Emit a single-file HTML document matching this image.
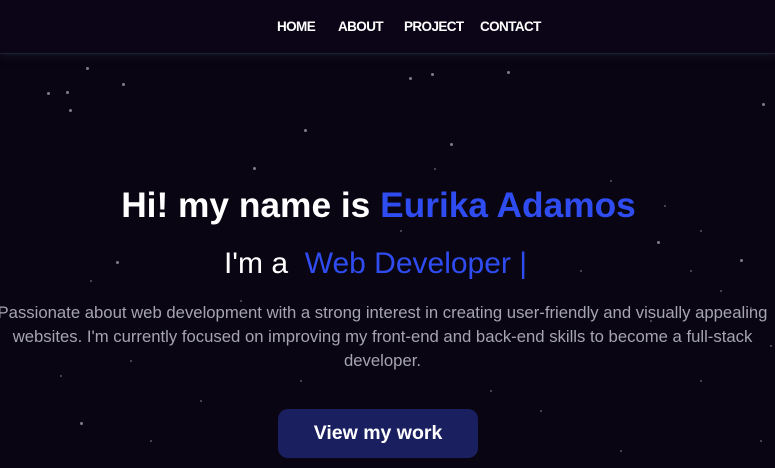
<!DOCTYPE html>
<html><head><meta charset="utf-8"><style>
html,body{margin:0;padding:0;width:775px;height:468px;overflow:hidden;background:#0a0512;font-family:"Liberation Sans",sans-serif}
.nav{position:absolute;left:0;top:0;width:775px;height:53px;background:#0c0517;border-bottom:1px solid #1c2230;box-shadow:0 2px 8px rgba(30,40,60,.5)}
.nav span{position:absolute;top:19px;color:#fff;font-weight:bold;font-size:13.5px;letter-spacing:-0.6px}
.c{position:absolute;left:0;width:775px;text-align:center;white-space:nowrap}
.s{position:absolute;border-radius:50%;background:#8a8a99}
</style></head><body>
<div class="nav">
<span style="left:277px">HOME</span>
<span style="left:338px">ABOUT</span>
<span style="left:404px">PROJECT</span>
<span style="left:480px">CONTACT</span>
</div>
<div id="stars"></div>
<div class="c" style="left:-9px;top:186px;font-size:35.3px;font-weight:bold;color:#fff;">Hi! my name is <span style="color:#2f4cf0">Eurika Adamos</span></div>
<div class="c" style="left:-12px;top:247px;font-size:30px;color:#fff;">I'm a&nbsp; <span style="color:#2f4cf0">Web Developer |</span></div>
<div class="c" style="left:-5px;top:301px;font-size:16.7px;line-height:24px;color:#a4a4b2;">Passionate about web development with a strong interest in creating user-friendly and visually appealing<br>websites. I'm currently focused on improving my front-end and back-end skills to become a full-stack<br>developer.</div>
<div style="position:absolute;left:278px;top:409px;width:200px;height:49px;border-radius:10px;background:#1a1f60;color:#fff;font-size:19.5px;font-weight:bold;text-align:center;line-height:49px;">View my work</div>
<script>
var p=[[86,67,3],[122,83,3],[47,92,3],[66,91,3],[69,109,3],[409,77,3],[431,73,3],[507,71,3],[762,103,3],[304,129,3],[450,143,3],[253,167,3],[434,168,2],[657,241,3],[740,259,3],[116,261,3],[80,422,3],[664,205,2],[750,307,2],[700,230,2],[600,340,2],[540,410,2],[700,380,2],[200,400,2],[150,440,2],[620,450,2],[770,345,2],[300,380,2],[90,280,2],[240,300,2],[580,270,2],[610,180,2],[720,290,2],[650,320,2],[490,390,2],[130,360,2],[60,375,2],[760,440,2],[400,230,2],[690,270,2]];
var h='';p.forEach(function(a){h+='<div class="s" style="left:'+a[0]+'px;top:'+a[1]+'px;width:'+a[2]+'px;height:'+a[2]+'px;opacity:'+(a[2]>2?0.9:0.6)+'"></div>'});
document.getElementById('stars').innerHTML=h;
</script>
</body></html>
